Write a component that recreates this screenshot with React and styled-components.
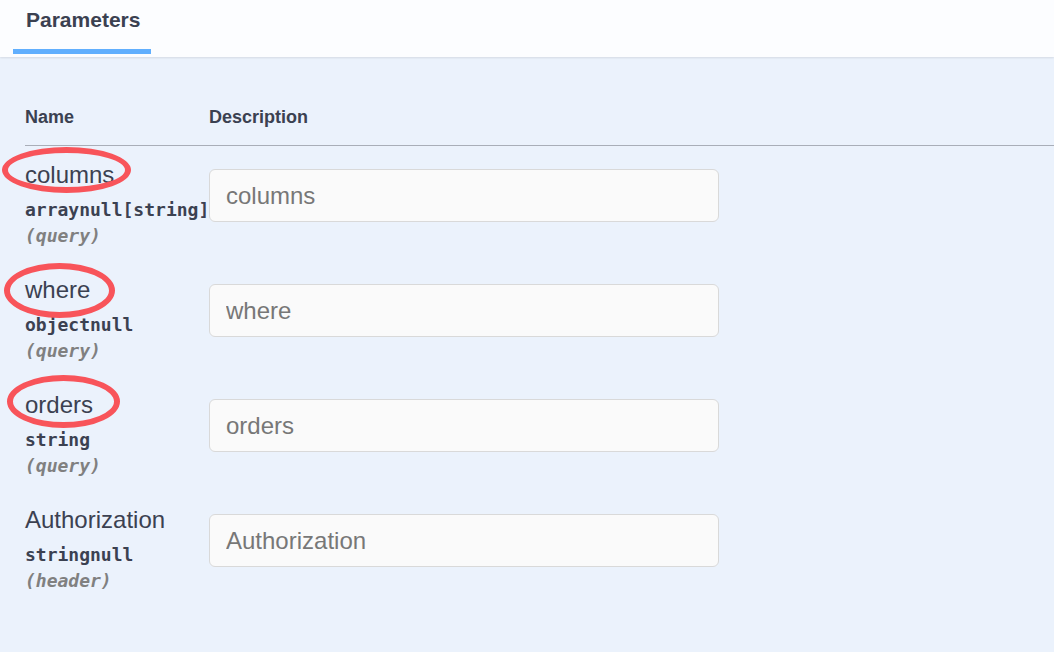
import React from "react";
import styled, { createGlobalStyle } from "styled-components";

const Global = createGlobalStyle`
  html, body { margin: 0; padding: 0; background: #ebf2fc; }
  body { font-family: "Liberation Sans", Arial, sans-serif; color: #3b4151; }
  #root { min-height: 652px; }
`;

const Page = styled.div`
  min-height: 652px;
  background: #ebf2fc;
  overflow: hidden;
`;

const TabBar = styled.div`
  height: 57px;
  box-sizing: border-box;
  padding: 5px 0 0 13px;
  background: rgba(255, 255, 255, 0.82);
  box-shadow: 0 1px 2px rgba(0, 0, 0, 0.1);
  display: flex;
  position: relative;
`;

const Tab = styled.div`
  display: flex;
  flex-direction: column;
  width: 138px;
`;

const TabLabel = styled.div`
  font-size: 21px;
  font-weight: 700;
  line-height: 30px;
  padding-left: 13px;
  color: #3b4151;
`;

const TabUnderline = styled.div`
  margin-top: 14px;
  height: 5px;
  background: #61affe;
`;

const Table = styled.div`
  padding: 48px 0 0 25px;
`;

const HeaderRow = styled.div`
  display: grid;
  grid-template-columns: 184px 1fr;
  padding-bottom: 16px;
  border-bottom: 1px solid #a9aeb8;
`;

const HeaderCell = styled.div`
  font-size: 18px;
  font-weight: 700;
  line-height: 24px;
  color: #3b4151;
`;

const Row = styled.div`
  display: grid;
  grid-template-columns: 184px 1fr;
  padding: 14px 0 12px;
  height: 115px;
  box-sizing: border-box;
`;

const NameCell = styled.div`
  display: flex;
  flex-direction: column;
`;

const NameLine = styled.div`
  position: relative;
  font-size: 24px;
  line-height: 30px;
  color: #3b4151;
  white-space: nowrap;
`;

const Type = styled.div`
  margin-top: 8px;
  font-family: "DejaVu Sans Mono", "Liberation Mono", monospace;
  font-size: 18px;
  font-weight: 700;
  line-height: 23px;
  color: #3b4151;
  white-space: nowrap;
`;

const Location = styled.div`
  margin-top: 3px;
  font-family: "DejaVu Sans Mono", "Liberation Mono", monospace;
  font-size: 18px;
  font-weight: 700;
  font-style: italic;
  line-height: 24px;
  color: #808080;
`;

const DescCell = styled.div`
  padding-top: 9px;
`;

const Input = styled.input`
  box-sizing: border-box;
  width: 510px;
  height: 53px;
  margin: 0;
  padding: 0 16px;
  border: 1px solid #d9d9d9;
  border-radius: 6px;
  background: #fafafa;
  font-family: "Liberation Sans", Arial, sans-serif;
  font-size: 24px;
  color: #3b4151;
  outline: none;
  &::placeholder {
    color: #777;
    opacity: 1;
  }
`;

const Circle = styled.div`
  position: absolute;
  left: ${(p) => p.$l}px;
  top: ${(p) => p.$t}px;
  width: ${(p) => p.$w}px;
  height: ${(p) => p.$h}px;
  box-sizing: border-box;
  border: 6px solid #f8545a;
  border-radius: 50%;
  pointer-events: none;
`;

const params = [
  { name: "columns", type: "arraynull[string]", loc: "(query)", mark: { l: -23, t: -13, w: 129, h: 46 } },
  { name: "where", type: "objectnull", loc: "(query)", mark: { l: -21, t: -12, w: 111, h: 55 } },
  { name: "orders", type: "string", loc: "(query)", mark: { l: -18, t: -15, w: 113, h: 53 } },
  { name: "Authorization", type: "stringnull", loc: "(header)" },
];

export default function App() {
  return (
    <Page>
      <Global />
      <TabBar>
        <Tab>
          <TabLabel>Parameters</TabLabel>
          <TabUnderline />
        </Tab>
      </TabBar>
      <Table>
        <HeaderRow>
          <HeaderCell>Name</HeaderCell>
          <HeaderCell>Description</HeaderCell>
        </HeaderRow>
        {params.map((p) => (
          <Row key={p.name}>
            <NameCell>
              <NameLine>
                {p.name}
                {p.mark && <Circle $l={p.mark.l} $t={p.mark.t} $w={p.mark.w} $h={p.mark.h} />}
              </NameLine>
              <Type>{p.type}</Type>
              <Location>{p.loc}</Location>
            </NameCell>
            <DescCell>
              <Input placeholder={p.name} />
            </DescCell>
          </Row>
        ))}
      </Table>
    </Page>
  );
}
